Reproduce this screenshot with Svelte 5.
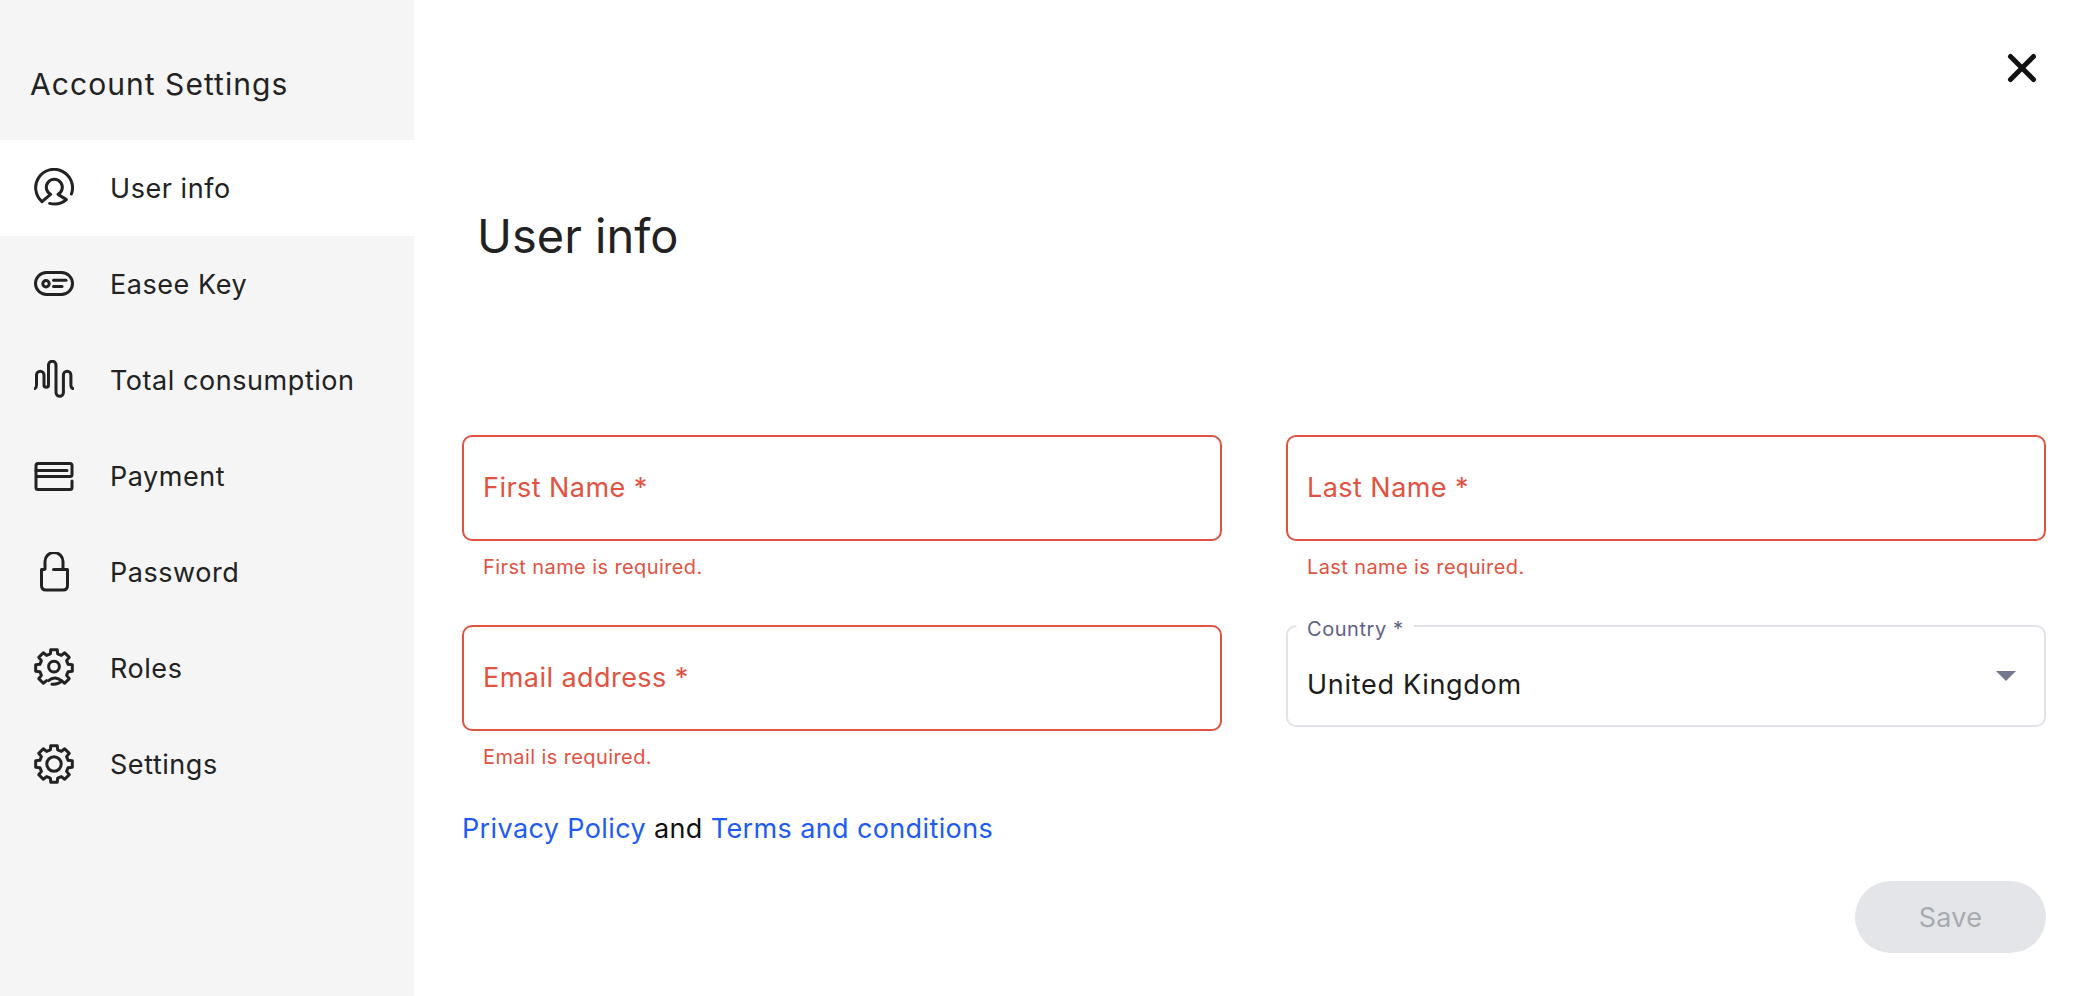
<script>
  function pt(r, deg) {
    const a = (deg - 90) * Math.PI / 180;
    return (20 + r * Math.cos(a)).toFixed(2) + ' ' + (20 + r * Math.sin(a)).toFixed(2);
  }
  function gear(open) {
    const pts = [];
    for (let k = 0; k < 8; k++) {
      if (open && k === 0) continue;
      const c = 180 + 45 * k;
      pts.push(pt(14.6, c - 14.5), pt(18.6, c - 10), pt(18.6, c + 10), pt(14.6, c + 14.5));
    }
    return 'M' + pts.join('L') + (open ? '' : 'Z');
  }
  const circle = (cx, cy, r) => `M${cx - r} ${cy}a${r} ${r} 0 1 0 ${2 * r} 0a${r} ${r} 0 1 0 ${-2 * r} 0`;

  const nav = [
    { label: 'User info', active: true, paths: [
      'M8 33.6A18.4 18.4 0 1 1 37.4 26',
      'M8 33.6L16.6 26.4A8 8 0 1 1 24 26.4L32.4 31.6C27 36.4 21 36.6 15.6 35.4'
    ] },
    { label: 'Easee Key', paths: [
      'M12.5 8.5H27.5A11 11 0 0 1 27.5 30.5H12.5A11 11 0 0 1 12.5 8.5Z',
      circle(12, 19.8, 3.2),
      'M19.5 16.2H32', 'M19.5 22.6H28'
    ] },
    { label: 'Total consumption', paths: [
      'M1 28.5C2 28 2.5 27 2.5 25V15A3.75 3.75 0 0 1 10 15V25A2.25 2.25 0 0 0 14.5 25V5A3.75 3.75 0 0 1 22 5V32.5A3.7 3.7 0 0 0 29.4 32.5V15A3.75 3.75 0 0 1 36.9 15V25C36.9 27 37.5 28 38.8 28.5'
    ] },
    { label: 'Payment', paths: [
      'M2 14.5H33',
      'M2 20.5H36Q38 20.5 38 18.5V9.5Q38 7.5 36 7.5H4Q2 7.5 2 9.5V31.5Q2 33.5 4 33.5H36Q38 33.5 38 31.5V25'
    ] },
    { label: 'Password', paths: [
      'M11 17V9.5A9 9 0 0 1 29 9.5V17',
      'M19.5 17.5H33.5V33.5Q33.5 38 29 38H12Q7.5 38 7.5 33.5V17.5H10'
    ] },
    { label: 'Roles', paths: [
      gear(true), circle(20, 18.6, 5.4),
      'M14.5 32.6C19 29 24 29.4 27.6 33C24.6 36 21 36.6 18 36.2'
    ] },
    { label: 'Settings', paths: [ gear(false), circle(20, 20, 7.2) ] }
  ];
</script>

<div class="page">
  <aside class="sidebar">
    <h2>Account Settings</h2>
    <nav>
      {#each nav as item}
        <div class="item" class:active={item.active}>
          <svg viewBox="0 0 40 40" width="40" height="40">
            {#each item.paths as d}<path {d} />{/each}
          </svg>
          <span>{item.label}</span>
        </div>
      {/each}
    </nav>
  </aside>

  <main>
    <div class="top">
      <button class="close" aria-label="Close">
        <svg viewBox="0 0 40 40" width="40" height="40"><path d="M8.5 8.5L31.5 31.5M31.5 8.5L8.5 31.5" /></svg>
      </button>
    </div>
    <h1>User info</h1>

    <div class="grid">
      <div>
        <div class="field"><span>First Name *</span></div>
        <p class="error">First name is required.</p>
      </div>
      <div>
        <div class="field"><span>Last Name *</span></div>
        <p class="error">Last name is required.</p>
      </div>
      <div>
        <div class="field"><span>Email address *</span></div>
        <p class="error">Email is required.</p>
      </div>
      <div class="select">
        <span class="legend">Country *</span>
        <span class="value">United Kingdom</span>
        <i class="arrow"></i>
      </div>
    </div>

    <p class="links"><a href="#privacy">Privacy Policy</a> and <a href="#terms">Terms and conditions</a></p>

    <div class="actions"><button class="save" disabled>Save</button></div>
  </main>
</div>

<style>
  :global(body) { margin: 0; background: #fff; }
  .page {
    display: flex;
    height: 996px;
    overflow: hidden;
    font-family: Inter, "Liberation Sans", sans-serif;
    color: #222;
  }
  .sidebar {
    width: 414px;
    flex: none;
    background: #f5f5f5;
  }
  h2 {
    margin: 0;
    height: 140px;
    box-sizing: border-box;
    padding: 66px 0 0 30px;
    font-size: 30px;
    line-height: 36px;
    font-weight: 400;
    letter-spacing: 1.05px;
  }
  .item {
    display: flex;
    align-items: center;
    gap: 36px;
    height: 96px;
    padding-left: 34px;
    font-size: 27px;
    letter-spacing: 0.55px;
  }
  .item.active { background: #fff; }
  .item svg { fill: none; stroke: #222; stroke-width: 3; stroke-linecap: round; stroke-linejoin: round; flex: none; }
  main {
    flex: 1;
    padding: 48px 44px 0 48px;
    min-width: 0;
  }
  .top { display: flex; justify-content: flex-end; padding-right: 4px; }
  .close { border: 0; background: none; padding: 0; height: 40px; width: 40px; }
  .close svg { display: block; fill: none; stroke: #111; stroke-width: 5; stroke-linecap: round; }
  h1 {
    margin: 118px 0 169px 15px;
    font-size: 47px;
    line-height: 60px;
    font-weight: 400;
    color: #222;
  }
  .grid {
    display: grid;
    grid-template-columns: 760px 760px;
    column-gap: 64px;
    row-gap: 44px;
    align-items: start;
  }
  .field {
    box-sizing: border-box;
    height: 106px;
    border: 2px solid #e25241;
    border-radius: 10px;
    padding: 0 0 2px 19px;
    display: flex;
    align-items: center;
    color: #e25241;
    font-size: 27px;
    letter-spacing: 0.45px;
  }
  .error {
    margin: 12px 0 0 21px;
    font-size: 20px;
    line-height: 28px;
    color: #e25241;
    letter-spacing: 0.4px;
  }
  .select {
    box-sizing: border-box;
    position: relative;
    height: 102px;
    border: 2px solid #e2e3e8;
    border-radius: 10px;
    padding-left: 19px;
    display: flex;
    align-items: center;
  }
  .legend {
    position: absolute;
    left: 8px;
    top: -11px;
    padding: 0 11px;
    background: #fff;
    font-size: 20px;
    line-height: 26px;
    color: #5f6182;
    letter-spacing: 0.55px;
  }
  .value { font-size: 27px; margin-top: 16px; color: #1c1c1c; letter-spacing: 0.7px; }
  .arrow {
    position: absolute;
    right: 28px;
    top: 44px;
    width: 0;
    height: 0;
    border-left: 10px solid transparent;
    border-right: 10px solid transparent;
    border-top: 10px solid #75768f;
  }
  .links {
    margin: 40px 0 0;
    font-size: 27px;
    line-height: 36px;
    color: #111;
    letter-spacing: 0.38px;
  }
  a { color: #1e5bf5; text-decoration: none; }
  .actions { display: flex; justify-content: flex-end; margin-top: 34px; }
  .save {
    width: 191px;
    height: 72px;
    border: 0;
    border-radius: 36px;
    background: #e4e5e9;
    color: #a9aaaf;
    font: inherit;
    font-size: 27px;
    letter-spacing: 0.3px;
  }
</style>
